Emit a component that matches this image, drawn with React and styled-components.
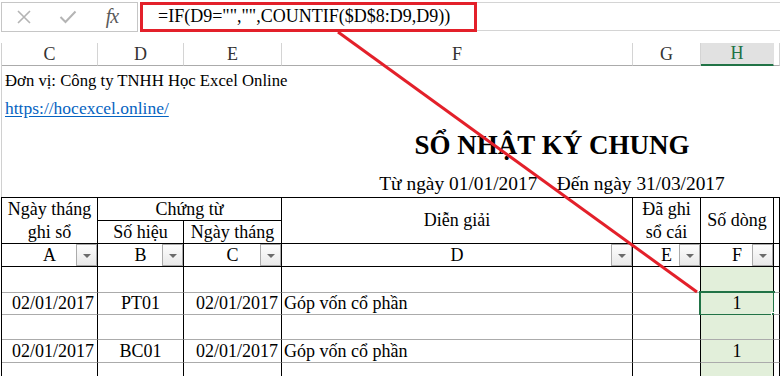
import React from "react";
import styled, { createGlobalStyle, css } from "styled-components";

const serif = css`
  font-family: "Liberation Serif", "Times New Roman", serif;
`;

const GlobalStyle = createGlobalStyle`
  html, body { margin: 0; padding: 0; background: #fff; }
  body {
    width: 780px;
    height: 376px;
    overflow: hidden;
    color: #000;
    font-family: "Liberation Serif", serif;
  }
`;

const COLS = "96px 86px 98px 351px 68px 73px 1fr";

const Page = styled.div`
  position: relative;
  width: 780px;
  height: 376px;
  overflow: hidden;
  ${serif}
`;

/* ---------- formula bar ---------- */
const FormulaBar = styled.div`
  display: flex;
  align-items: flex-start;
  gap: 2px;
  height: 33px;
  padding-top: 2px;
  box-sizing: border-box;
`;

const CommandBox = styled.div`
  display: flex;
  margin-left: 1px;
  width: 137px;
  height: 30px;
  box-sizing: border-box;
  border: 1px solid #c6c6c6;
`;

const CommandSlot = styled.div`
  width: 44px;
  display: flex;
  align-items: center;
  justify-content: center;
`;

const Fx = styled.span`
  ${serif}
  font-style: italic;
  font-size: 20px;
  letter-spacing: -1px;
  color: #5a5a5a;
  margin-top: -2px;
`;

const FormulaInput = styled.div`
  ${serif}
  flex: 1;
  margin-left: 1px;
  height: 29px;
  box-sizing: border-box;
  border-top: 1px solid #d4d4d4;
  border-bottom: 1px solid #d4d4d4;
  padding-left: 17px;
  font-size: 18px;
  line-height: 27px;
  white-space: nowrap;
`;

/* ---------- column letters ---------- */
const ColHeadRow = styled.div`
  display: grid;
  grid-template-columns: ${COLS};
  margin-top: 10px;
  margin-left: 1px;
  height: 23px;
  border-left: 1px solid #d0d0d0;
`;

const ColHead = styled.div`
  ${serif}
  display: flex;
  align-items: center;
  justify-content: center;
  box-sizing: border-box;
  font-size: 18px;
  color: ${(p) => (p.$active ? "#217346" : "#333")};
  background: ${(p) => (p.$active ? "#e1e1e1" : "#fff")};
  border-right: 1px solid ${(p) => (p.$active ? "#e1e1e1" : "#d4d4d4")};
  border-bottom: ${(p) => (p.$active ? "2px solid #217346" : "1px solid #ababab")};
`;

/* ---------- top info ---------- */
const Info = styled.div`
  margin-left: 1px;
  border-left: 1px solid #d0d0d0;
`;

const InfoLine = styled.div`
  ${serif}
  height: ${(p) => p.$h}px;
  line-height: ${(p) => p.$h}px;
  padding-left: 3px;
  font-size: ${(p) => p.$size}px;
  white-space: nowrap;
`;

const Link = styled.span`
  ${serif}
  color: #0563c1;
  text-decoration: underline;
  text-underline-offset: 2px;
`;

const CenterLine = styled.div`
  ${serif}
  width: 1100px;
  height: ${(p) => p.$h}px;
  line-height: ${(p) => p.$h}px;
  text-align: center;
  white-space: pre;
  font-size: ${(p) => p.$size}px;
  font-weight: ${(p) => (p.$bold ? 700 : 400)};
`;

/* ---------- table ---------- */
const Table = styled.div`
  display: grid;
  grid-template-columns: ${COLS};
  grid-template-rows: 23px 23px 23px 26px 22px 25px 23px 26px;
  margin-left: 1px;
  border-top: 1px solid #000;
  border-left: 1px solid #000;
`;

const Cell = styled.div`
  ${serif}
  font-size: 18px;
  position: relative;
  box-sizing: border-box;
  display: flex;
  align-items: center;
  justify-content: ${(p) =>
    p.$align === "right" ? "flex-end" : p.$align === "left" ? "flex-start" : "center"};
  flex-direction: ${(p) => (p.$stack ? "column" : "row")};
  text-align: center;
  line-height: 23px;
  padding: 0 ${(p) => (p.$align === "right" ? "3px" : "0")} 0
    ${(p) => (p.$align === "left" ? "2px" : "0")};
  white-space: nowrap;
  grid-column: ${(p) => p.$col || "auto"};
  grid-row: ${(p) => p.$row || "auto"};
  background: ${(p) => (p.$green ? "#e2efda" : "#fff")};
  border-right: 1px solid #000;
  border-bottom: 1px solid ${(p) => (p.$soft ? "#ababab" : "#000")};
`;

const FilterButton = styled.div`
  position: absolute;
  top: 0;
  right: 0;
  width: 21px;
  height: 22px;
  box-sizing: border-box;
  border: 1px solid #ababab;
  background: linear-gradient(#fdfdfd, #e9e9e9);
  display: flex;
  align-items: center;
  justify-content: center;

  &::after {
    content: "";
    border-left: 4px solid transparent;
    border-right: 4px solid transparent;
    border-top: 4px solid #6b6b6b;
    margin-top: 1px;
  }
`;

const Selection = styled.div`
  position: absolute;
  top: -2px;
  left: -2px;
  right: -2px;
  bottom: -2px;
  border: 2px solid #217346;
  pointer-events: none;
`;

const Handle = styled.div`
  position: absolute;
  right: -5px;
  bottom: -5px;
  width: 7px;
  height: 7px;
  box-sizing: border-box;
  background: #217346;
  border: 1px solid #fff;
`;

const Overlay = styled.svg`
  position: absolute;
  top: 0;
  left: 0;
  pointer-events: none;
`;

const letters = ["C", "D", "E", "F", "G", "H", ""];
const filters = ["A", "B", "C", "D", "E", "F"];

const rows = [
  { h: "blank" },
  { date: "02/01/2017", no: "PT01", date2: "02/01/2017", desc: "Góp vốn cổ phần", n: "1", selected: true },
  { h: "blank" },
  { date: "02/01/2017", no: "BC01", date2: "02/01/2017", desc: "Góp vốn cổ phần", n: "1" },
  { h: "blank" },
];

const XIcon = () => (
  <svg width="14" height="14" viewBox="0 0 14 14">
    <path d="M1 1 L13 13 M13 1 L1 13" stroke="#b4b4b4" strokeWidth="1.6" fill="none" />
  </svg>
);

const CheckIcon = () => (
  <svg width="18" height="14" viewBox="0 0 18 14">
    <path d="M1.5 7 L6.5 12 L16.5 1.5" stroke="#b4b4b4" strokeWidth="2" fill="none" />
  </svg>
);

const App = () => {
  return (
    <Page>
      <GlobalStyle />
      <FormulaBar>
        <CommandBox>
          <CommandSlot>
            <XIcon />
          </CommandSlot>
          <CommandSlot>
            <CheckIcon />
          </CommandSlot>
          <CommandSlot>
            <Fx>fx</Fx>
          </CommandSlot>
        </CommandBox>
        <FormulaInput>=IF(D9="","",COUNTIF($D$8:D9,D9))</FormulaInput>
      </FormulaBar>

      <ColHeadRow>
        {letters.map((l, i) => (
          <ColHead key={i} $active={l === "H"}>
            {l}
          </ColHead>
        ))}
      </ColHeadRow>

      <Info>
        <InfoLine $h={30} $size={16.7}>Đơn vị: Công ty TNHH Học Excel Online</InfoLine>
        <InfoLine $h={25} $size={17.5}>
          <Link>https://hocexcel.online/</Link>
        </InfoLine>
        <CenterLine $h={49} $size={27} $bold>
          SỔ NHẬT KÝ CHUNG
        </CenterLine>
        <CenterLine $h={27} $size={19.4}>
          {"Từ ngày 01/01/2017    Đến ngày 31/03/2017"}
        </CenterLine>
      </Info>

      <Table>
        <Cell $col="1" $row="1 / 3" $stack>
          <span>Ngày tháng</span>
          <span>ghi sổ</span>
        </Cell>
        <Cell $col="2 / 4" $row="1">Chứng từ</Cell>
        <Cell $col="4" $row="1 / 3">Diễn giải</Cell>
        <Cell $col="5" $row="1 / 3" $stack>
          <span>Đã ghi</span>
          <span>sổ cái</span>
        </Cell>
        <Cell $col="6" $row="1 / 3">Số dòng</Cell>
        <Cell $col="7" $row="1 / 3" />
        <Cell $col="2" $row="2">Số hiệu</Cell>
        <Cell $col="3" $row="2">Ngày tháng</Cell>

        {filters.map((f) => (
          <Cell key={f}>
            {f}
            <FilterButton />
          </Cell>
        ))}
        <Cell />

        {rows.map((r, i) =>
          r.h === "blank" ? (
            <React.Fragment key={i}>
              <Cell $soft />
              <Cell $soft />
              <Cell $soft />
              <Cell $soft />
              <Cell $soft />
              <Cell $soft $green />
              <Cell $soft />
            </React.Fragment>
          ) : (
            <React.Fragment key={i}>
              <Cell $soft $align="right">{r.date}</Cell>
              <Cell $soft>{r.no}</Cell>
              <Cell $soft $align="right">{r.date2}</Cell>
              <Cell $soft $align="left">{r.desc}</Cell>
              <Cell $soft />
              <Cell $soft $green>
                {r.n}
                {r.selected && (
                  <Selection>
                    <Handle />
                  </Selection>
                )}
              </Cell>
              <Cell $soft />
            </React.Fragment>
          )
        )}
      </Table>

      <Overlay width="780" height="376" viewBox="0 0 780 376">
        <rect x="141.5" y="3.5" width="334" height="27" fill="none" stroke="#e3202a" strokeWidth="3" />
        <line x1="338" y1="32" x2="697" y2="292" stroke="#e3202a" strokeWidth="3" />
      </Overlay>
    </Page>
  );
};

export default App;
